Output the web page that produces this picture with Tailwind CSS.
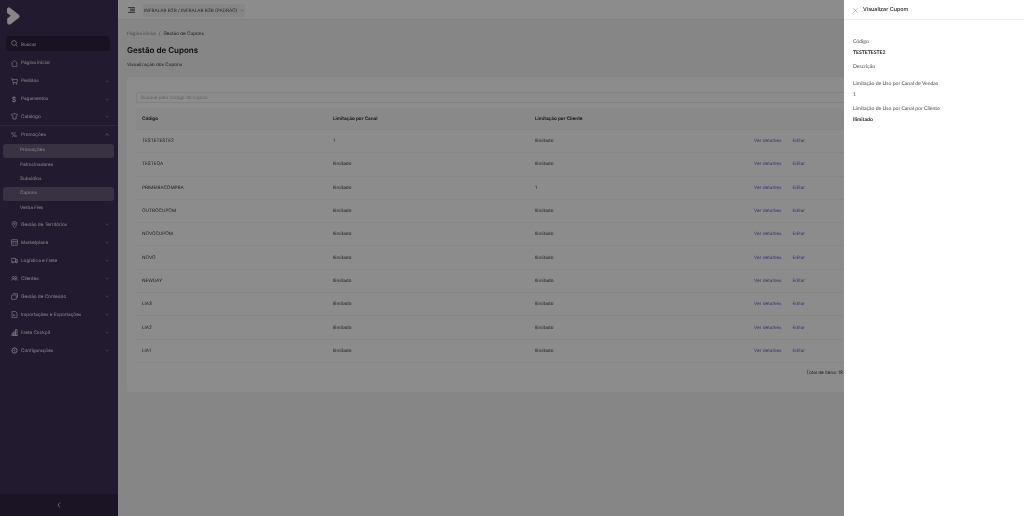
<!DOCTYPE html>
<html lang="pt-BR">
<head>
<meta charset="utf-8">
<title>Gestão de Cupons</title>
<script src="https://cdn.jsdelivr.net/npm/@tailwindcss/browser@4"></script>
</head>
<body class="m-0 overflow-hidden bg-[#868686]">
<div class="relative flex h-[516px] w-[1024px] overflow-hidden bg-[#f5f5f5] font-['Inter',sans-serif] text-[4.65px] text-[#333] blur-[0.5px] [text-rendering:geometricPrecision]">
  <!-- Sidebar -->
  <aside class="flex h-full w-[118px] shrink-0 flex-col bg-[#3e3156] text-[#f0edf5]">
    <div class="flex h-[36px] items-start pl-[6px] pt-[7px]">
      <svg width="14" height="18" viewBox="0 0 14 18"><path d="M1 2.5C1 .6 3 .1 4.2 1L12.6 7.4C14 8.5 14 10 12.6 11.1L5 17C3.4 18.2 1.2 17.4 1.2 15.4V11.5L4.8 8.8L1 6Z" fill="#f4f4f4"/></svg>
    </div>
    <div class="ml-[6px] mr-[8px] flex h-[15px] items-center gap-[3px] rounded-[3px] bg-[#2c223f] pl-[5px]">
      <svg width="7" height="7" viewBox="0 0 7 7" fill="none" stroke="#e8e8e8" stroke-width=".7"><circle cx="3" cy="3" r="2.4"/><path d="M4.8 4.8L6.6 6.6"/></svg>
      <span class="mt-[3px]">Buscar</span>
    </div>
    <nav class="mt-[3px] flex flex-col [&_span]:mt-[1.5px]">
      <div class="flex h-[18px] items-center pl-[10.5px] pr-[9px]"><svg class="mr-[3.5px]" width="7" height="7" viewBox="0 0 7 7" fill="none" stroke="#ddd" stroke-width=".6"><path d="M.5 3.3L3.5.5L6.5 3.3M1.2 2.8V6.5H5.8V2.8"/></svg><span>Página inicial</span></div>
      <div class="flex h-[18px] items-center pl-[10.5px] pr-[9px]"><svg class="mr-[3.5px]" width="7" height="7" viewBox="0 0 7 7" fill="none" stroke="#ddd" stroke-width=".7"><path d="M.3 .8H1.4L2 4.6H6L6.6 1.6H1.6"/><circle cx="2.4" cy="5.9" r=".5"/><circle cx="5.4" cy="5.9" r=".5"/></svg><span>Pedidos</span><svg class="ml-auto" width="4" height="3" viewBox="0 0 4 3" fill="none" stroke="#aaa" stroke-width=".5"><path d="M.5 .8L2 2.2L3.5 .8"/></svg></div>
      <div class="flex h-[18px] items-center pl-[10.5px] pr-[9px]"><span class="mr-[3.5px] w-[7px] text-center text-[7px] leading-none">$</span><span>Pagamentos</span><svg class="ml-auto" width="4" height="3" viewBox="0 0 4 3" fill="none" stroke="#aaa" stroke-width=".5"><path d="M.5 .8L2 2.2L3.5 .8"/></svg></div>
      <div class="flex h-[18px] items-center border-b border-[#54466c] pl-[10.5px] pr-[9px]"><svg class="mr-[3.5px]" width="7" height="7" viewBox="0 0 7 7" fill="none" stroke="#ddd" stroke-width=".7"><path d="M2.2 .8H4.8L6.6 1.6L5.8 3H5.1V6H1.9V3H1.2L.4 1.6Z"/></svg><span>Catálogo</span><svg class="ml-auto" width="4" height="3" viewBox="0 0 4 3" fill="none" stroke="#aaa" stroke-width=".5"><path d="M.5 .8L2 2.2L3.5 .8"/></svg></div>
      <div class="flex h-[17.5px] items-center pl-[10.5px] pr-[9px]"><span class="mr-[3.5px] w-[7px] text-center text-[6.5px] leading-none">%</span><span>Promoções</span><svg class="ml-auto" width="4" height="3" viewBox="0 0 4 3" fill="none" stroke="#ddd" stroke-width=".6"><path d="M.5 2.2L2 .8L3.5 2.2"/></svg></div>
      <div class="ml-[3px] mr-[4px] flex h-[14.4px] items-center rounded-[3px] bg-[#685c78] pl-[17px]">Promoções</div>
      <div class="flex h-[14.4px] items-center pl-[20px]">Patrocinadores</div>
      <div class="flex h-[14.4px] items-center pl-[20px]">Subsídios</div>
      <div class="ml-[3px] mr-[4px] flex h-[14.4px] items-center rounded-[3px] bg-[#685c78] pl-[17px]">Cupons</div>
      <div class="flex h-[14.4px] items-center pl-[20px]">Verba Flex</div>
      <div class="flex h-[18px] items-center pl-[10.5px] pr-[9px]"><svg class="mr-[3.5px]" width="7" height="7" viewBox="0 0 7 7" fill="none" stroke="#ddd" stroke-width=".7"><path d="M3.5 6.6C2 5.2 1.2 4 1.2 2.8A2.3 2.3 0 0 1 5.8 2.8C5.8 4 5 5.2 3.5 6.6Z"/><circle cx="3.5" cy="2.8" r=".8"/></svg><span>Gestão de Territórios</span><svg class="ml-auto" width="4" height="3" viewBox="0 0 4 3" fill="none" stroke="#aaa" stroke-width=".5"><path d="M.5 .8L2 2.2L3.5 .8"/></svg></div>
      <div class="flex h-[18px] items-center pl-[10.5px] pr-[9px]"><svg class="mr-[3.5px]" width="7" height="7" viewBox="0 0 7 7" fill="none" stroke="#ddd" stroke-width=".7"><rect x=".5" y=".7" width="6" height="5.6" rx=".5"/><path d="M.5 2.6H6.5M1.5 4.2H3M4 4.2H5.5"/></svg><span>Marketplace</span><svg class="ml-auto" width="4" height="3" viewBox="0 0 4 3" fill="none" stroke="#aaa" stroke-width=".5"><path d="M.5 .8L2 2.2L3.5 .8"/></svg></div>
      <div class="flex h-[18px] items-center pl-[10.5px] pr-[9px]"><svg class="mr-[3.5px]" width="7" height="7" viewBox="0 0 7 7" fill="none" stroke="#ddd" stroke-width=".7"><path d="M.3 1.4H4.6V5H.3ZM4.6 2.6H6.7V5H4.6Z"/><circle cx="1.8" cy="5.4" r=".6"/><circle cx="5.3" cy="5.4" r=".6"/></svg><span>Logística e Frete</span><svg class="ml-auto" width="4" height="3" viewBox="0 0 4 3" fill="none" stroke="#aaa" stroke-width=".5"><path d="M.5 .8L2 2.2L3.5 .8"/></svg></div>
      <div class="flex h-[18px] items-center pl-[10.5px] pr-[9px]"><svg class="mr-[3.5px]" width="7" height="7" viewBox="0 0 7 7" fill="none" stroke="#ddd" stroke-width=".7"><circle cx="2.3" cy="2.6" r="1.1"/><circle cx="4.8" cy="2.6" r="1.1"/><path d="M.3 5.6C.5 4.4 1.2 4 2.3 4S4.1 4.4 4.3 5.6M3.6 4.1C5 3.8 6.4 4.2 6.7 5.6"/></svg><span>Clientes</span><svg class="ml-auto" width="4" height="3" viewBox="0 0 4 3" fill="none" stroke="#aaa" stroke-width=".5"><path d="M.5 .8L2 2.2L3.5 .8"/></svg></div>
      <div class="flex h-[18px] items-center pl-[10.5px] pr-[9px]"><svg class="mr-[3.5px]" width="7" height="7" viewBox="0 0 7 7" fill="none" stroke="#ddd" stroke-width=".7"><rect x=".5" y="2" width="4.8" height="4.4" rx=".4"/><path d="M1.8 .7H6.5V4.8"/></svg><span>Gestão de Conteúdo</span><svg class="ml-auto" width="4" height="3" viewBox="0 0 4 3" fill="none" stroke="#aaa" stroke-width=".5"><path d="M.5 .8L2 2.2L3.5 .8"/></svg></div>
      <div class="flex h-[18px] items-center pl-[10.5px] pr-[9px]"><svg class="mr-[3.5px]" width="7" height="7" viewBox="0 0 7 7" fill="none" stroke="#ddd" stroke-width=".7"><path d="M1 .4H4.4L6 2V6.6H1ZM2.6 5.2V3.2M2.6 3.2L4.4 5.2"/></svg><span>Importações e Exportações</span><svg class="ml-auto" width="4" height="3" viewBox="0 0 4 3" fill="none" stroke="#aaa" stroke-width=".5"><path d="M.5 .8L2 2.2L3.5 .8"/></svg></div>
      <div class="flex h-[18px] items-center pl-[10.5px] pr-[9px]"><svg class="mr-[3.5px]" width="7" height="7" viewBox="0 0 7 7" fill="none" stroke="#ddd" stroke-width=".8"><path d="M.6 6.5H6.5M1.2 6.5V4.2H2.8V6.5M2.8 6.5V2.8H4.4V6.5M4.4 6.5V.6H6V6.5"/></svg><span>Frete Cockpit</span><svg class="ml-auto" width="4" height="3" viewBox="0 0 4 3" fill="none" stroke="#aaa" stroke-width=".5"><path d="M.5 .8L2 2.2L3.5 .8"/></svg></div>
      <div class="flex h-[18px] items-center pl-[10.5px] pr-[9px]"><svg class="mr-[3.5px]" width="7" height="7" viewBox="0 0 7 7" fill="none" stroke="#ddd" stroke-width="1"><circle cx="3.5" cy="3.5" r="2.6"/><circle cx="3.5" cy="3.5" r=".7" stroke-width=".6"/></svg><span>Configurações</span><svg class="ml-auto" width="4" height="3" viewBox="0 0 4 3" fill="none" stroke="#aaa" stroke-width=".5"><path d="M.5 .8L2 2.2L3.5 .8"/></svg></div>
    </nav>
    <div class="mt-auto flex h-[22px] items-center justify-center bg-[#312644]">
      <svg width="4" height="6" viewBox="0 0 4 6" fill="none" stroke="#ddd" stroke-width=".8"><path d="M3 .6L1 3L3 5.4"/></svg>
    </div>
  </aside>

  <!-- Main -->
  <main class="flex h-full min-w-0 flex-1 flex-col">
    <header class="flex h-[20px] shrink-0 items-center border-b border-[#ececec] bg-white pl-[10px] pt-[1px]">
      <svg width="7" height="6" viewBox="0 0 7 6" fill="none" stroke="#333" stroke-width=".8"><path d="M0 .6H7M2 2.2H7M2 3.8H7M0 5.4H7"/></svg>
      <div class="ml-[8px] flex h-[13px] items-center gap-[3px] rounded-[3px] bg-[#f5f5f5] px-[1px] text-[#444]">
        <span class="mt-[2px]">INFRALAB B2B / INFRALAB B2B (PADRÃO)</span>
        <svg width="4" height="3" viewBox="0 0 4 3" fill="none" stroke="#888" stroke-width=".5"><path d="M.5 .8L2 2.2L3.5 .8"/></svg>
      </div>
    </header>
    <div class="flex flex-col pl-[9px] pr-[9px] pt-[10px]">
      <div class="mt-[1.5px] flex h-[6px] items-center gap-[3px]"><span class="text-[#888]">Página inicial</span><span class="text-[#777]">/</span><span class="text-[#333]">Gestão de Cupons</span></div>
      <h1 class="mt-[6px] text-[8px] font-semibold leading-[12px] text-[#111]">Gestão de Cupons</h1>
      <p class="mt-[5px] leading-[8px] text-[#333]">Visualização dos Cupons</p>
      <div class="mt-[8.5px] h-[315px] w-full rounded-[4px] bg-white pl-[9px] pt-[15px]">
        <div class="flex h-[11px] items-center rounded-[2px] border border-[#ebebeb] pl-[4px] pt-[1px] text-[#b5b5b5]">Busque pelo código do cupom</div>
        <div class="mt-[5px] grid h-[22px] grid-cols-[191px_202px_219px_1fr] items-center border-b border-[#f5f5f5] bg-[#fafafa] pl-[6px] font-semibold text-[#222] [&>span]:mt-[1px]">
          <span>Código</span><span>Limitação por Canal</span><span>Limitação por Cliente</span><span></span>
        </div>
        <div class="grid h-[23.3px] grid-cols-[191px_202px_219px_1fr] items-center border-b border-[#f5f5f5] pl-[6px] [&>span]:mt-[1px]"><span>TESTETESTE2</span><span>1</span><span>Ilimitado</span><span class="flex gap-[11px] text-[#6a5cd0]"><span>Ver detalhes</span><span>Editar</span></span></div>
        <div class="grid h-[23.3px] grid-cols-[191px_202px_219px_1fr] items-center border-b border-[#f5f5f5] pl-[6px] [&>span]:mt-[1px]"><span>TESTEQA</span><span>Ilimitado</span><span>Ilimitado</span><span class="flex gap-[11px] text-[#6a5cd0]"><span>Ver detalhes</span><span>Editar</span></span></div>
        <div class="grid h-[23.3px] grid-cols-[191px_202px_219px_1fr] items-center border-b border-[#f5f5f5] pl-[6px] [&>span]:mt-[1px]"><span>PRIMEIRACOMPRA</span><span>Ilimitado</span><span>1</span><span class="flex gap-[11px] text-[#6a5cd0]"><span>Ver detalhes</span><span>Editar</span></span></div>
        <div class="grid h-[23.3px] grid-cols-[191px_202px_219px_1fr] items-center border-b border-[#f5f5f5] pl-[6px] [&>span]:mt-[1px]"><span>OUTROCUPOM</span><span>Ilimitado</span><span>Ilimitado</span><span class="flex gap-[11px] text-[#6a5cd0]"><span>Ver detalhes</span><span>Editar</span></span></div>
        <div class="grid h-[23.3px] grid-cols-[191px_202px_219px_1fr] items-center border-b border-[#f5f5f5] pl-[6px] [&>span]:mt-[1px]"><span>NOVOCUPOM</span><span>Ilimitado</span><span>Ilimitado</span><span class="flex gap-[11px] text-[#6a5cd0]"><span>Ver detalhes</span><span>Editar</span></span></div>
        <div class="grid h-[23.3px] grid-cols-[191px_202px_219px_1fr] items-center border-b border-[#f5f5f5] pl-[6px] [&>span]:mt-[1px]"><span>NOVO</span><span>Ilimitado</span><span>Ilimitado</span><span class="flex gap-[11px] text-[#6a5cd0]"><span>Ver detalhes</span><span>Editar</span></span></div>
        <div class="grid h-[23.3px] grid-cols-[191px_202px_219px_1fr] items-center border-b border-[#f5f5f5] pl-[6px] [&>span]:mt-[1px]"><span>NEWDAY</span><span>Ilimitado</span><span>Ilimitado</span><span class="flex gap-[11px] text-[#6a5cd0]"><span>Ver detalhes</span><span>Editar</span></span></div>
        <div class="grid h-[23.3px] grid-cols-[191px_202px_219px_1fr] items-center border-b border-[#f5f5f5] pl-[6px] [&>span]:mt-[1px]"><span>LIA3</span><span>Ilimitado</span><span>Ilimitado</span><span class="flex gap-[11px] text-[#6a5cd0]"><span>Ver detalhes</span><span>Editar</span></span></div>
        <div class="grid h-[23.3px] grid-cols-[191px_202px_219px_1fr] items-center border-b border-[#f5f5f5] pl-[6px] [&>span]:mt-[1px]"><span>LIA2</span><span>Ilimitado</span><span>Ilimitado</span><span class="flex gap-[11px] text-[#6a5cd0]"><span>Ver detalhes</span><span>Editar</span></span></div>
        <div class="grid h-[23.3px] grid-cols-[191px_202px_219px_1fr] items-center border-b border-[#f5f5f5] pl-[6px] [&>span]:mt-[1px]"><span>LIA1</span><span>Ilimitado</span><span>Ilimitado</span><span class="flex gap-[11px] text-[#6a5cd0]"><span>Ver detalhes</span><span>Editar</span></span></div>
        <div class="mt-[7px] pr-[172px] text-right text-[#333]">Total de itens: 18</div>
      </div>
    </div>
  </main>

  <!-- Mask -->
  <div class="absolute inset-0 bg-black/45"></div>

  <!-- Drawer -->
  <aside class="absolute inset-y-0 right-0 flex w-[180px] flex-col bg-white font-['Lato',sans-serif] text-[5.1px] text-[#444]">
    <div class="flex h-[20px] shrink-0 items-center gap-[5px] border-b border-[#f0f0f0] pl-[9px] pt-[1px]">
      <svg width="5" height="5" viewBox="0 0 5 5" fill="none" stroke="#888" stroke-width=".5"><path d="M.3 .3L4.7 4.7M4.7 .3L.3 4.7"/></svg>
      <span class="font-['Inter',sans-serif] text-[5.4px] font-medium text-[#222]">Visualizar Cupom</span>
    </div>
    <dl class="flex flex-col pl-[9px] pt-[18px]">
      <dt class="leading-[8px]">Código</dt>
      <dd class="mt-[3px] font-bold leading-[8px] text-[#222]">TESTETESTE2</dd>
      <dt class="mt-[5.5px] leading-[8px]">Descrição</dt>
      <dt class="mt-[9px] leading-[8px]">Limitação de Uso por Canal de Vendas</dt>
      <dd class="mt-[3px] leading-[8px]">1</dd>
      <dt class="mt-[6px] leading-[8px]">Limitação de Uso por Canal por Cliente</dt>
      <dd class="mt-[3px] font-bold leading-[8px] text-[#222]">Ilimitado</dd>
    </dl>
  </aside>
</div>
</body>
</html>
